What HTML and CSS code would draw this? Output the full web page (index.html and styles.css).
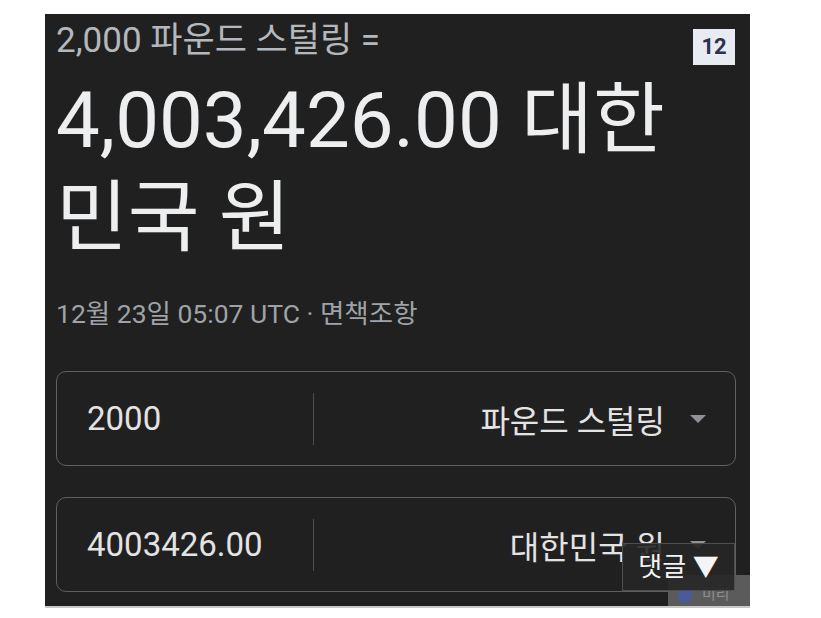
FILE: index.html
```html
<!DOCTYPE html>
<html>
<head>
  <title>환율 변환</title>
  <link rel="stylesheet" href="styles.css">
</head>
<body>

  <div class="panel">
    <div class="query">2,000 파운드 스털링 =</div>
    <div class="result">4,003,426.00 대한민국 원</div>
    <div class="meta">12월 23일 05:07 UTC · 면책조항</div>

    <div class="field">
      <div class="amount">2000</div>
      <div class="divider"></div>
      <div class="unit">
        <span>파운드 스털링</span>
        <span class="caret"></span>
      </div>
    </div>

    <div class="field second">
      <div class="amount">4003426.00</div>
      <div class="divider"></div>
      <div class="unit">
        <span>대한민국 원</span>
        <span class="caret"></span>
      </div>
    </div>

    <div class="badge">12</div>
    <div class="mark"><span class="mark-icon"></span><span>미리</span></div>
    <div class="comments">댓글 ▼</div>
  </div>

</body>
</html>
```

FILE: styles.css
```css
body {
  margin: 0;
  background: #fff;
  font-family: Roboto, "Noto Sans CJK KR", sans-serif;
}

.panel {
  position: relative;
  width: 705px;
  height: 594px;
  margin: 14px 0 0 45px;
  padding: 6px 0 0 11px;
  box-sizing: border-box;
  background: #202020;
  border-bottom: 2px solid #c8c8c8;
  overflow: hidden;
}

.query {
  font-size: 35px;
  line-height: 42px;
  color: #b4b7bc;
}

.result {
  margin-top: 10px;
  width: 650px;
  font-size: 78px;
  line-height: 98px;
  color: #eceef0;
}

.meta {
  margin-top: 30px;
  font-size: 26.5px;
  line-height: 32px;
  color: #9fa3a8;
}

.field {
  display: flex;
  align-items: center;
  width: 680px;
  height: 95px;
  margin-top: 41px;
  padding: 0 29px 0 30px;
  box-sizing: border-box;
  border: 1px solid #5c5f63;
  border-radius: 10px;
  font-size: 33px;
  color: #e3e3e3;
}

.field.second {
  margin-top: 31px;
}

.amount {
  flex: 0 0 226px;
}

.divider {
  width: 1px;
  height: 52px;
  background: #4a4d51;
}

.unit {
  flex: 1;
  display: flex;
  justify-content: flex-end;
  align-items: center;
  gap: 25px;
  font-size: 32px;
}

.caret {
  width: 0;
  height: 0;
  border-left: 8px solid transparent;
  border-right: 8px solid transparent;
  border-top: 8px solid #8e9297;
}

.badge {
  position: absolute;
  top: 15px;
  right: 15px;
  width: 42px;
  height: 36px;
  background: #e9ebf2;
  color: #2c3150;
  font-size: 22px;
  font-weight: bold;
  line-height: 36px;
  text-align: center;
}

.mark {
  position: absolute;
  left: 623px;
  top: 561px;
  width: 82px;
  height: 31px;
  display: flex;
  align-items: flex-end;
  gap: 10px;
  padding: 0 0 3px 10px;
  box-sizing: border-box;
  background: #5b5b5b;
  color: #8d8d8d;
  font-size: 15px;
}

.mark-icon {
  width: 14px;
  height: 14px;
  border-radius: 50% 0 50% 50%;
  background: #4a5a9c;
}

.comments {
  position: absolute;
  left: 577px;
  top: 529px;
  width: 113px;
  height: 48px;
  box-sizing: border-box;
  border: 1px solid #4e4e4e;
  background: rgba(38, 38, 38, 0.9);
  color: #f4f4f4;
  font-size: 26px;
  line-height: 46px;
  text-align: center;
}
```
